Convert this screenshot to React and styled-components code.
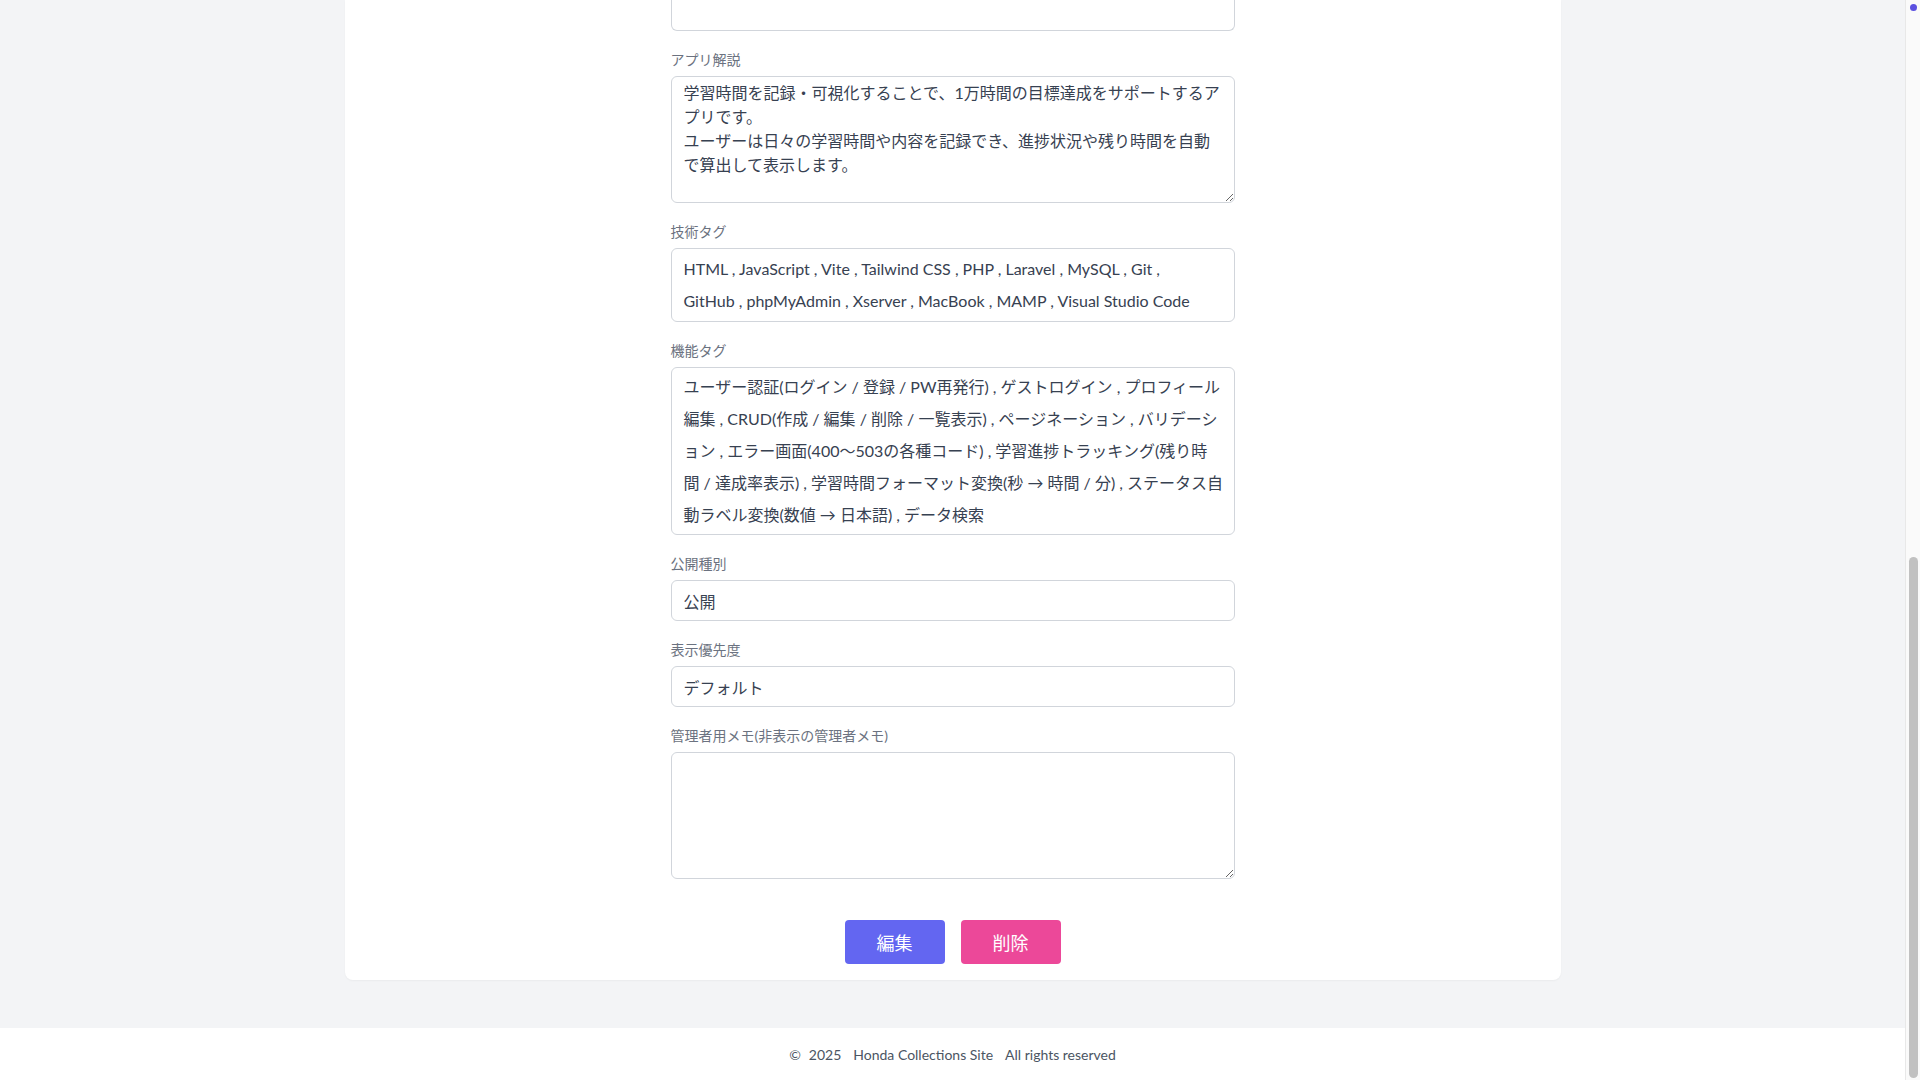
import React from "react";
import styled, { createGlobalStyle } from "styled-components";

const GlobalStyle = createGlobalStyle`
  html, body {
    margin: 0;
    padding: 0;
    background: #f3f4f6;
    overflow: hidden;
  }
  body {
    font-family: "Lato", "Noto Sans CJK JP", sans-serif;
    color: #374151;
  }
  * {
    box-sizing: border-box;
  }
`;

const Shell = styled.div`
  display: flex;
  height: 100vh;
  overflow: hidden;
`;

const Viewport = styled.div`
  flex: 1;
  display: flex;
  flex-direction: column;
  background: #f3f4f6;
`;

const Main = styled.main`
  flex: 1;
  padding-bottom: 48px;
`;

const Card = styled.div`
  max-width: 1216px;
  margin: 0 auto;
  background: #ffffff;
  border-radius: 0 0 8px 8px;
  box-shadow: 0 1px 2px rgba(0, 0, 0, 0.04);
  padding-bottom: 16px;
`;

const Form = styled.div`
  width: 564px;
  margin: 0 auto;
  display: flex;
  flex-direction: column;
  gap: 19px;
`;

const Field = styled.div`
  display: flex;
  flex-direction: column;
`;

const Label = styled.label`
  font-size: 14px;
  line-height: 20px;
  color: #6b7280;
  margin-bottom: 6px;
`;

// 上にスクロールして見切れている入力欄の下端
const InputTail = styled.div`
  height: 31px;
  border: 1px solid #d1d5db;
  border-top: none;
  border-radius: 0 0 6px 6px;
  background: #ffffff;
`;

const Input = styled.input`
  height: 41px;
  padding: 8px 12px;
  font: inherit;
  font-size: 16px;
  line-height: 24px;
  color: #374151;
  border: 1px solid #d1d5db;
  border-radius: 6px;
  background: #ffffff;
  outline: none;
`;

const TextArea = styled.textarea`
  height: 127px;
  padding: 4px 12px;
  font: inherit;
  font-size: 16px;
  line-height: 24px;
  color: #374151;
  border: 1px solid #d1d5db;
  border-radius: 6px;
  background: #ffffff;
  outline: none;
  resize: vertical;
`;

const TagBox = styled.div`
  padding: ${(p) => (p.$tight ? "3px 12px" : "4px 12px")};
  font-size: 16px;
  line-height: 32px;
  color: #374151;
  border: 1px solid #d1d5db;
  border-radius: 6px;
  background: #ffffff;
`;

const TagLine = styled.span`
  display: block;
  white-space: nowrap;
`;

const Actions = styled.div`
  display: flex;
  justify-content: center;
  gap: 16px;
  margin-top: 22px;
`;

const Button = styled.button`
  width: 100px;
  height: 44px;
  border: none;
  border-radius: 4px;
  font: inherit;
  font-size: 18px;
  color: #ffffff;
  background: ${(p) => (p.$variant === "danger" ? "#ec4899" : "#6366f1")};
  cursor: pointer;
`;

const Footer = styled.footer`
  background: #ffffff;
  height: 52px;
  display: flex;
  justify-content: center;
  align-items: center;
  gap: 12px;
  font-size: 14px;
  color: #4b5563;
`;

const Copy = styled.span`
  display: flex;
  gap: 8px;
`;

const ScrollTrack = styled.aside`
  width: 15px;
  flex-shrink: 0;
  display: flex;
  flex-direction: column;
  align-items: center;
  justify-content: space-between;
  padding: 4px 0 2px 1px;
  background: #fafafa;
  border-left: 1px solid #e8e8e8;
`;

const Dot = styled.span`
  width: 7px;
  height: 7px;
  border-radius: 50%;
  background: #5b50e0;
`;

const Thumb = styled.span`
  width: 9px;
  height: 521px;
  border-radius: 5px;
  background: #c1c1c1;
`;

const description =
  "学習時間を記録・可視化することで、1万時間の目標達成をサポートするアプリです。\nユーザーは日々の学習時間や内容を記録でき、進捗状況や残り時間を自動で算出して表示します。";

const techLines = [
  "HTML , JavaScript , Vite , Tailwind CSS , PHP , Laravel , MySQL , Git ,",
  "GitHub , phpMyAdmin , Xserver , MacBook , MAMP , Visual Studio Code",
];

const featureLines = [
  "ユーザー認証(ログイン / 登録 / PW再発行) , ゲストログイン , プロフィール",
  "編集 , CRUD(作成 / 編集 / 削除 / 一覧表示) , ページネーション , バリデーシ",
  "ョン , エラー画面(400〜503の各種コード) , 学習進捗トラッキング(残り時",
  "間 / 達成率表示) , 学習時間フォーマット変換(秒 → 時間 / 分) , ステータス自",
  "動ラベル変換(数値 → 日本語) , データ検索",
];

const App = () => {
  return (
    <Shell>
      <GlobalStyle />
      <Viewport>
        <Main>
          <Card>
            <Form>
              <InputTail />
              <Field>
                <Label>アプリ解説</Label>
                <TextArea readOnly value={description} />
              </Field>
              <Field>
                <Label>技術タグ</Label>
                <TagBox>
                  {techLines.map((line) => (
                    <TagLine key={line}>{line}</TagLine>
                  ))}
                </TagBox>
              </Field>
              <Field>
                <Label>機能タグ</Label>
                <TagBox $tight>
                  {featureLines.map((line) => (
                    <TagLine key={line}>{line}</TagLine>
                  ))}
                </TagBox>
              </Field>
              <Field>
                <Label>公開種別</Label>
                <Input readOnly value="公開" />
              </Field>
              <Field>
                <Label>表示優先度</Label>
                <Input readOnly value="デフォルト" />
              </Field>
              <Field>
                <Label>管理者用メモ(非表示の管理者メモ)</Label>
                <TextArea readOnly value="" />
              </Field>
              <Actions>
                <Button>編集</Button>
                <Button $variant="danger">削除</Button>
              </Actions>
            </Form>
          </Card>
        </Main>
        <Footer>
          <Copy>
            <span>©</span>
            <span>2025</span>
          </Copy>
          <span>Honda Collections Site</span>
          <span>All rights reserved</span>
        </Footer>
      </Viewport>
      <ScrollTrack>
        <Dot />
        <Thumb />
      </ScrollTrack>
    </Shell>
  );
};

export default App;
